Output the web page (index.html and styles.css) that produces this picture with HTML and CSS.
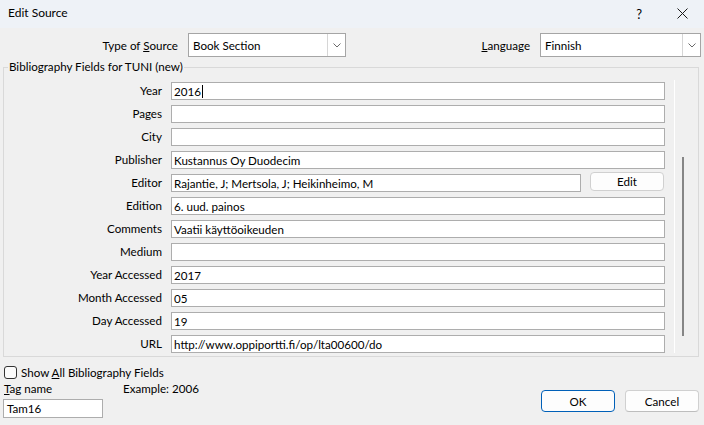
FILE: index.html
```html
<!DOCTYPE html>
<html lang="en">
<head>
<meta charset="utf-8">
<title>Edit Source</title>
<link rel="stylesheet" href="styles.css">
</head>
<body>
<div class="window">
  <header class="titlebar">
    <span class="title">Edit Source</span>
    <div class="title-controls">
      <span class="help">?</span>
      <svg class="close" width="11" height="11" viewBox="0 0 11 11"><path d="M0.5 0.5 L10.5 10.5 M10.5 0.5 L0.5 10.5" stroke="#1a1a1a" stroke-width="1" fill="none"/></svg>
    </div>
  </header>

  <div class="top-row">
    <label class="top-label">Type of <u>S</u>ource</label>
    <div class="select">
      <span class="select-value">Book Section</span>
      <span class="select-drop"><svg width="8" height="5" viewBox="0 0 8 5"><path d="M0.5 0.5 L4 4 L7.5 0.5" stroke="#6a6a6a" stroke-width="1" fill="none"/></svg></span>
    </div>
    <label class="top-label"><u>L</u>anguage</label>
    <div class="select">
      <span class="select-value">Finnish</span>
      <span class="select-drop"><svg width="8" height="5" viewBox="0 0 8 5"><path d="M0.5 0.5 L4 4 L7.5 0.5" stroke="#6a6a6a" stroke-width="1" fill="none"/></svg></span>
    </div>
  </div>

  <fieldset class="group">
    <legend class="group-title">Bibliography Fields for TUNI (new)</legend>
    <div class="scroll">
      <div class="rows">
        <label class="row-label">Year</label><div class="input wide">2016<span class="caret"></span></div>
        <label class="row-label">Pages</label><div class="input wide"></div>
        <label class="row-label">City</label><div class="input wide"></div>
        <label class="row-label">Publisher</label><div class="input wide">Kustannus Oy Duodecim</div>
        <label class="row-label">Editor</label><div class="input">Rajantie, J; Mertsola, J; Heikinheimo, M</div><button class="edit-btn">Edit</button>
        <label class="row-label">Edition</label><div class="input wide">6. uud. painos</div>
        <label class="row-label">Comments</label><div class="input wide">Vaatii käyttöoikeuden</div>
        <label class="row-label">Medium</label><div class="input wide"></div>
        <label class="row-label">Year Accessed</label><div class="input wide">2017</div>
        <label class="row-label">Month Accessed</label><div class="input wide">05</div>
        <label class="row-label">Day Accessed</label><div class="input wide">19</div>
        <label class="row-label">URL</label><div class="input wide">http://www.oppiportti.fi/op/lta00600/do</div>
      </div>
      <div class="scrollbar"><div class="thumb"></div></div>
    </div>
  </fieldset>

  <div class="bottom">
    <div class="bottom-left">
      <label class="check"><span class="check-box"></span><span class="check-text">Show <u>A</u>ll Bibliography Fields</span></label>
      <div class="tag-row"><span class="tag-label"><u>T</u>ag name</span><span class="example">Example: 2006</span></div>
      <div class="input tag-input">Tam16</div>
    </div>
    <div class="buttons">
      <button class="btn primary">OK</button>
      <button class="btn">Cancel</button>
    </div>
  </div>
</div>
</body>
</html>
```

FILE: styles.css
```css
* { box-sizing: border-box; }

html, body {
  margin: 0;
  padding: 0;
}

body {
  width: 704px;
  height: 425px;
  overflow: hidden;
  background: #f0f0f0;
  font-family: Lato, "Segoe UI", "Noto Sans", sans-serif;
  font-size: 11.6px;
  color: #000;
}

u { text-decoration: underline; text-underline-offset: 1px; }

.window {
  width: 704px;
  height: 425px;
}

/* Title bar */
.titlebar {
  height: 28px;
  background: #eef2f7;
  display: flex;
  align-items: center;
  padding-left: 8px;
  padding-bottom: 3px;
}
.title {
  flex: 1;
  font-size: 12px;
}
.title-controls {
  display: flex;
  align-items: center;
  padding-right: 16px;
  padding-top: 2px;
}
.help {
  font-size: 13px;
  margin-right: 35px;
}
.close { display: block; }

/* Top row */
.top-row {
  display: grid;
  grid-template-columns: 178px 158px 1fr 161px;
  column-gap: 10px;
  align-items: center;
  padding-right: 3px;
  margin-top: 5px;
  height: 24px;
}
.top-label {
  text-align: right;
}
.select {
  height: 24px;
  background: #fff;
  border: 1px solid #a5a5a5;
  display: flex;
  align-items: stretch;
}
.select-value {
  flex: 1;
  padding-left: 4px;
  display: flex;
  align-items: center;
}
.select-drop {
  width: 18px;
  border-left: 1px solid #d6d6d6;
  display: flex;
  align-items: center;
  justify-content: center;
}

/* Group box */
.group {
  margin: 2px 5px 0 3px;
  padding: 0 0 3px 0;
  border: 1px solid #d9d9d9;
  min-width: 0;
}
.group-title {
  margin-left: 4px;
  padding: 0 1px;
  line-height: 16px;
}
.scroll {
  display: flex;
  margin-top: 5px;
}
.rows {
  flex: 1;
  display: grid;
  grid-template-columns: 158px 410px 75px;
  grid-auto-rows: 18px;
  column-gap: 9px;
  row-gap: 5px;
  padding: 2px 9px 0 0;
  align-items: center;
}
.row-label {
  text-align: right;
  line-height: 18px;
}
.input {
  height: 18px;
  background: #fff;
  border: 1px solid #adadad;
  padding-left: 2px;
  display: flex;
  align-items: center;
  white-space: nowrap;
  overflow: hidden;
}
.input.wide {
  grid-column: span 2;
}
.caret {
  display: inline-block;
  width: 1px;
  height: 13px;
  background: #000;
  margin-left: 1px;
}
.edit-btn {
  align-self: start;
  margin-top: -2px;
  width: 74px;
  height: 19px;
  padding: 0;
  font: inherit;
  color: #000;
  background: #fdfdfd;
  border: 1px solid #d0d0d0;
  border-radius: 4px;
}
.scrollbar {
  width: 24px;
  border-left: 1px solid #ffffff;
  padding-left: 7px;
  padding-top: 77px;
}
.thumb {
  width: 2px;
  height: 179px;
  background: #868686;
}

/* Bottom */
.bottom {
  display: flex;
  justify-content: space-between;
  align-items: flex-end;
  padding: 0 5px 0 3px;
}
.bottom-left {
  display: flex;
  flex-direction: column;
}
.check {
  display: flex;
  align-items: center;
  margin-top: 9px;
  height: 13px;
}
.check-box {
  width: 13px;
  height: 13px;
  border: 1px solid #333;
  border-radius: 3px;
  background: #fbfbfb;
  margin-left: 1px;
  margin-right: 4px;
}
.tag-row {
  display: flex;
  margin-top: 2px;
  line-height: 16px;
  padding-left: 1px;
}
.tag-label {
  width: 119px;
}
.tag-input {
  margin-top: 2px;
  width: 100px;
  height: 19px;
  padding-left: 3px;
}
.buttons {
  display: flex;
  gap: 10px;
  margin-bottom: 6px;
}
.btn {
  width: 74px;
  height: 22px;
  padding: 0;
  font: inherit;
  color: #000;
  background: #fdfdfd;
  border: 1px solid #d0d0d0;
  border-bottom-color: #bdbdbd;
  border-radius: 4px;
}
.btn.primary {
  border: 1px solid #0060b8;
}
```
